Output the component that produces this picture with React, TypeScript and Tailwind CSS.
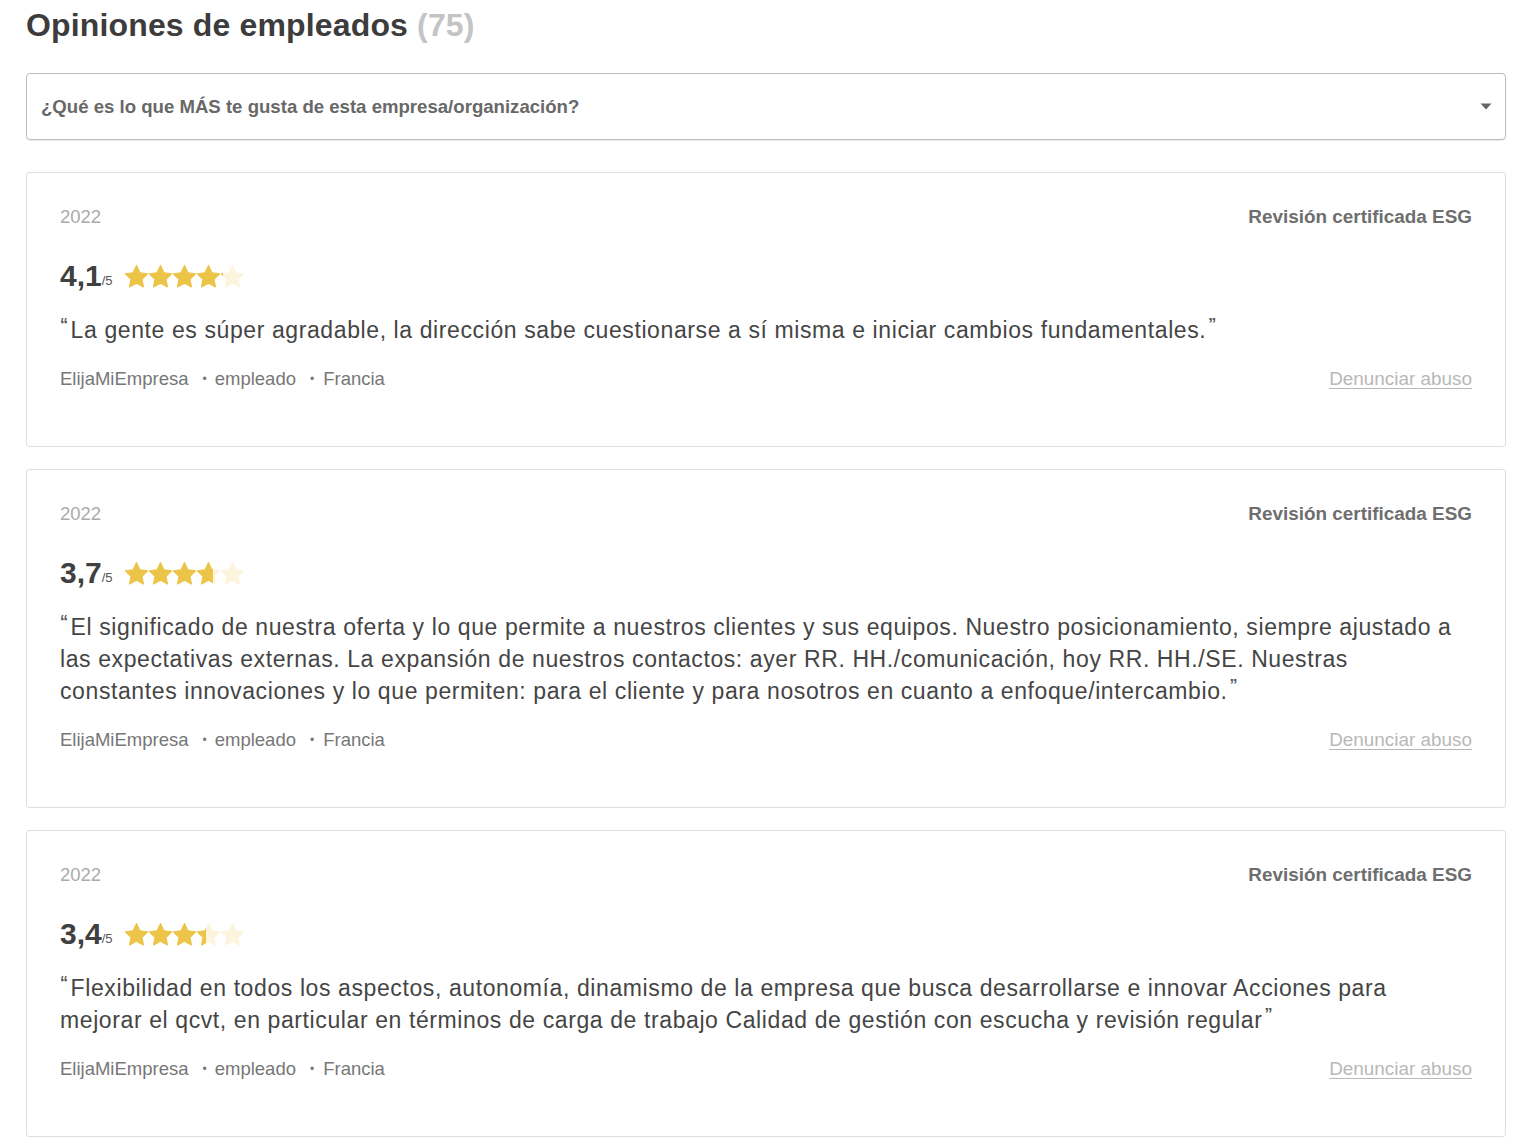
import React from "react";

type Review = {
  year: string;
  rating: number;
  text: string;
};

const reviews: Review[] = [
  {
    year: "2022",
    rating: 4.1,
    text: "La gente es súper agradable, la dirección sabe cuestionarse a sí misma e iniciar cambios fundamentales.",
  },
  {
    year: "2022",
    rating: 3.7,
    text: "El significado de nuestra oferta y lo que permite a nuestros clientes y sus equipos. Nuestro posicionamiento, siempre ajustado a las expectativas externas. La expansión de nuestros contactos: ayer RR. HH./comunicación, hoy RR. HH./SE. Nuestras constantes innovaciones y lo que permiten: para el cliente y para nosotros en cuanto a enfoque/intercambio.",
  },
  {
    year: "2022",
    rating: 3.4,
    text: "Flexibilidad en todos los aspectos, autonomía, dinamismo de la empresa que busca desarrollarse e innovar Acciones para mejorar el qcvt, en particular en términos de carga de trabajo Calidad de gestión con escucha y revisión regular",
  },
];

const STAR = "M12 1.8l3.1 6.6 7.2.9-5.3 5 1.4 7.1L12 17.9l-6.4 3.5 1.4-7.1-5.3-5 7.2-.9z";

function Star({ fill }: { fill: number }) {
  return (
    <span className="relative inline-block h-[23px] w-[23px]">
      <svg viewBox="1.5 1.3 21 21" className="absolute inset-0 h-[23px] w-[23px]">
        <path d={STAR} fill="#fcf4dc" strokeLinejoin="round" stroke="#fcf4dc" strokeWidth="1" />
      </svg>
      {fill > 0 && (
        <span className="absolute inset-y-0 left-0 overflow-hidden" style={{ width: `${fill * 100}%` }}>
          <svg viewBox="1.5 1.3 21 21" className="h-[23px] w-[23px]">
            <path d={STAR} fill="#ecc548" strokeLinejoin="round" stroke="#ecc548" strokeWidth="1" />
          </svg>
        </span>
      )}
    </span>
  );
}

function Stars({ rating }: { rating: number }) {
  return (
    <div className="flex items-center gap-[1px]">
      {[0, 1, 2, 3, 4].map((i) => {
        const f = Math.max(0, Math.min(1, rating - i));
        return <Star key={i} fill={f} />;
      })}
    </div>
  );
}

function ReviewCard({ review }: { review: Review }) {
  return (
    <div className="rounded-[3px] border border-[#dedede] bg-white px-[33px] pt-[32px] pb-[55px]">
      <div className="flex items-center justify-between leading-[24px]">
        <span className="text-[18.5px] text-[#ababab]">{review.year}</span>
        <span className="text-[18.9px] font-bold text-[#6e6e6e]">Revisión certificada ESG</span>
      </div>
      <div className="mt-[29px] flex h-[36px] items-center">
        <span className="text-[30px] font-bold leading-none text-[#404040]">{review.rating.toFixed(1).replace(".", ",")}</span>
        <span className="mt-[10px] mr-[12px] text-[13px] text-[#555]">/5</span>
        <Stars rating={review.rating} />
      </div>
      <p className="mt-[20px] text-[23px] leading-[32px] tracking-[0.6px] text-[#454545]">
        <span className="relative -top-[8px] mr-[2px] inline-block text-[16px] font-bold leading-none text-[#555]">“</span>
        {review.text}
        <span className="relative -top-[8px] ml-[2px] inline-block text-[16px] font-bold leading-none text-[#555]">”</span>
      </p>
      <div className="mt-[21px] flex items-center justify-between leading-[24px]">
        <div className="flex items-center text-[18.5px] text-[#777]">
          <span>ElijaMiEmpresa</span>
          <span className="ml-[14px] mr-[8px] text-[12px]">•</span>
          <span>empleado</span>
          <span className="ml-[14px] mr-[9px] text-[12px]">•</span>
          <span>Francia</span>
        </div>
        <a className="text-[18.9px] text-[#b8b8b8] underline underline-offset-[3px]">Denunciar abuso</a>
      </div>
    </div>
  );
}

export default function App() {
  return (
    <div className="min-h-screen bg-white pl-[26px] pr-[34px] pt-[5px] pb-[12px] font-['Liberation_Sans',Arial,sans-serif]">
      <h1 className="text-[32px] font-bold leading-[40px] tracking-[0.15px] text-[#3c3c3c]">
        Opiniones de empleados <span className="text-[#c4c4c4]">(75)</span>
      </h1>
      <div className="mt-[28px] flex h-[67px] items-center justify-between rounded-[4px] border border-[#bcbcbc] px-[14px] shadow-[0_1px_1px_rgba(0,0,0,0.08)]">
        <span className="text-[18.6px] font-bold text-[#686868]">¿Qué es lo que MÁS te gusta de esta empresa/organización?</span>
        <svg width="12" height="7" viewBox="0 0 12 7" className="mr-[-1px]">
          <path d="M0.5 0.5h11L6 6.5z" fill="#666" />
        </svg>
      </div>
      <div className="mt-[32px] flex flex-col gap-[22px]">
        {reviews.map((r, i) => (
          <ReviewCard key={i} review={r} />
        ))}
      </div>
    </div>
  );
}
